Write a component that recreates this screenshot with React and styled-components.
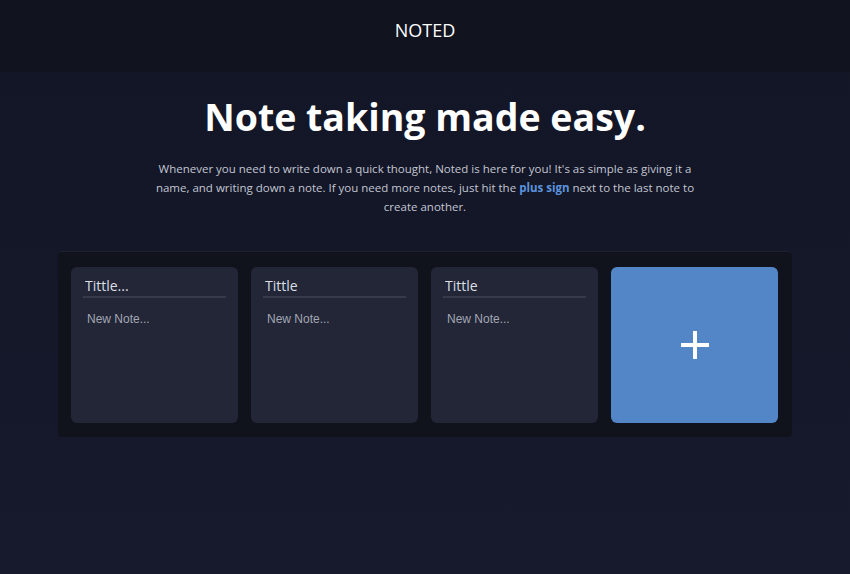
import React from "react";
import styled, { createGlobalStyle } from "styled-components";

const Global = createGlobalStyle`
  html, body { margin: 0; padding: 0; }
  body {
    background: #151829;
    font-family: "Open Sans", "Liberation Sans", sans-serif;
    width: 850px;
    height: 574px;
    overflow: hidden;
  }
  * { box-sizing: border-box; }
`;

const Page = styled.div`
  display: flex;
  flex-direction: column;
  min-height: 574px;
  background: linear-gradient(180deg, #131625 0%, #141728 40%, #161a2c 100%);
`;

const Header = styled.header`
  height: 72px;
  background: #11131f;
  display: flex;
  align-items: flex-start;
  justify-content: center;
  padding-top: 17px;
`;

const Logo = styled.h1`
  margin: 0;
  font-size: 18px;
  font-weight: 400;
  color: #ffffff;
  line-height: 26px;
`;

const Hero = styled.section`
  display: flex;
  flex-direction: column;
  align-items: center;
  padding-top: 20px;
`;

const Title = styled.h2`
  margin: 0;
  font-size: 37.5px;
  font-weight: 700;
  color: #ffffff;
  line-height: 50px;
`;

const Lead = styled.p`
  margin: 17px 0 0;
  width: 550px;
  text-align: center;
  font-size: 11.5px;
  line-height: 19px;
  color: #c3c6d2;
`;

const Accent = styled.span`
  color: #5b93de;
  font-weight: 700;
`;

const Board = styled.section`
  margin: 35px 0 0 58px;
  width: 734px;
  padding: 15px 14px 14px 13px;
  background: #10121c;
  border-top: 1px solid #1c2031;
  border-radius: 4px;
  display: grid;
  grid-template-columns: repeat(4, 167px);
  gap: 13px;
`;

const Card = styled.div`
  height: 156px;
  border-radius: 6px;
  background: #222637;
  padding: 10px 12px 10px 12px;
  display: flex;
  flex-direction: column;
`;

const TitleInput = styled.input`
  border: none;
  outline: none;
  background: transparent;
  border-bottom: 2px solid #353a4d;
  color: #dcdee6;
  font-family: "Open Sans", sans-serif;
  font-size: 14px;
  padding: 0 0 2px 2px;
  height: 21px;
  width: 100%;
  &::placeholder { color: #dcdee6; opacity: 1; }
`;

const NoteArea = styled.textarea`
  margin-top: 14px;
  flex: 1;
  border: none;
  outline: none;
  resize: none;
  background: transparent;
  color: #a2a6b3;
  font-family: "Liberation Sans", Arial, sans-serif;
  font-size: 12px;
  padding: 0 0 0 4px;
  &::placeholder { color: #a2a6b3; opacity: 1; }
`;

const AddCard = styled.button`
  height: 156px;
  border: none;
  border-radius: 6px;
  background: #5386c7;
  display: flex;
  align-items: center;
  justify-content: center;
  cursor: pointer;
  padding: 0;
`;

const notes = [
  { title: "", placeholder: "Tittle..." },
  { title: "Tittle", placeholder: "Tittle..." },
  { title: "Tittle", placeholder: "Tittle..." },
];

export default function App() {
  return (
    <Page>
      <Global />
      <Header>
        <Logo>NOTED</Logo>
      </Header>
      <Hero>
        <Title>Note taking made easy.</Title>
        <Lead>
          Whenever you need to write down a quick thought, Noted is here for you! It's as simple as giving it a
          name, and writing down a note. If you need more notes, just hit the <Accent>plus sign</Accent> next to the last note to
          create another.
        </Lead>
      </Hero>
      <Board>
        {notes.map((n, i) => (
          <Card key={i}>
            <TitleInput defaultValue={n.title} placeholder={n.placeholder} />
            <NoteArea placeholder="New Note..." />
          </Card>
        ))}
        <AddCard aria-label="Add note">
          <svg width="32" height="32" viewBox="0 0 32 32">
            <path d="M16 2v28M2 16h28" stroke="#ffffff" strokeWidth="4" />
          </svg>
        </AddCard>
      </Board>
    </Page>
  );
}
